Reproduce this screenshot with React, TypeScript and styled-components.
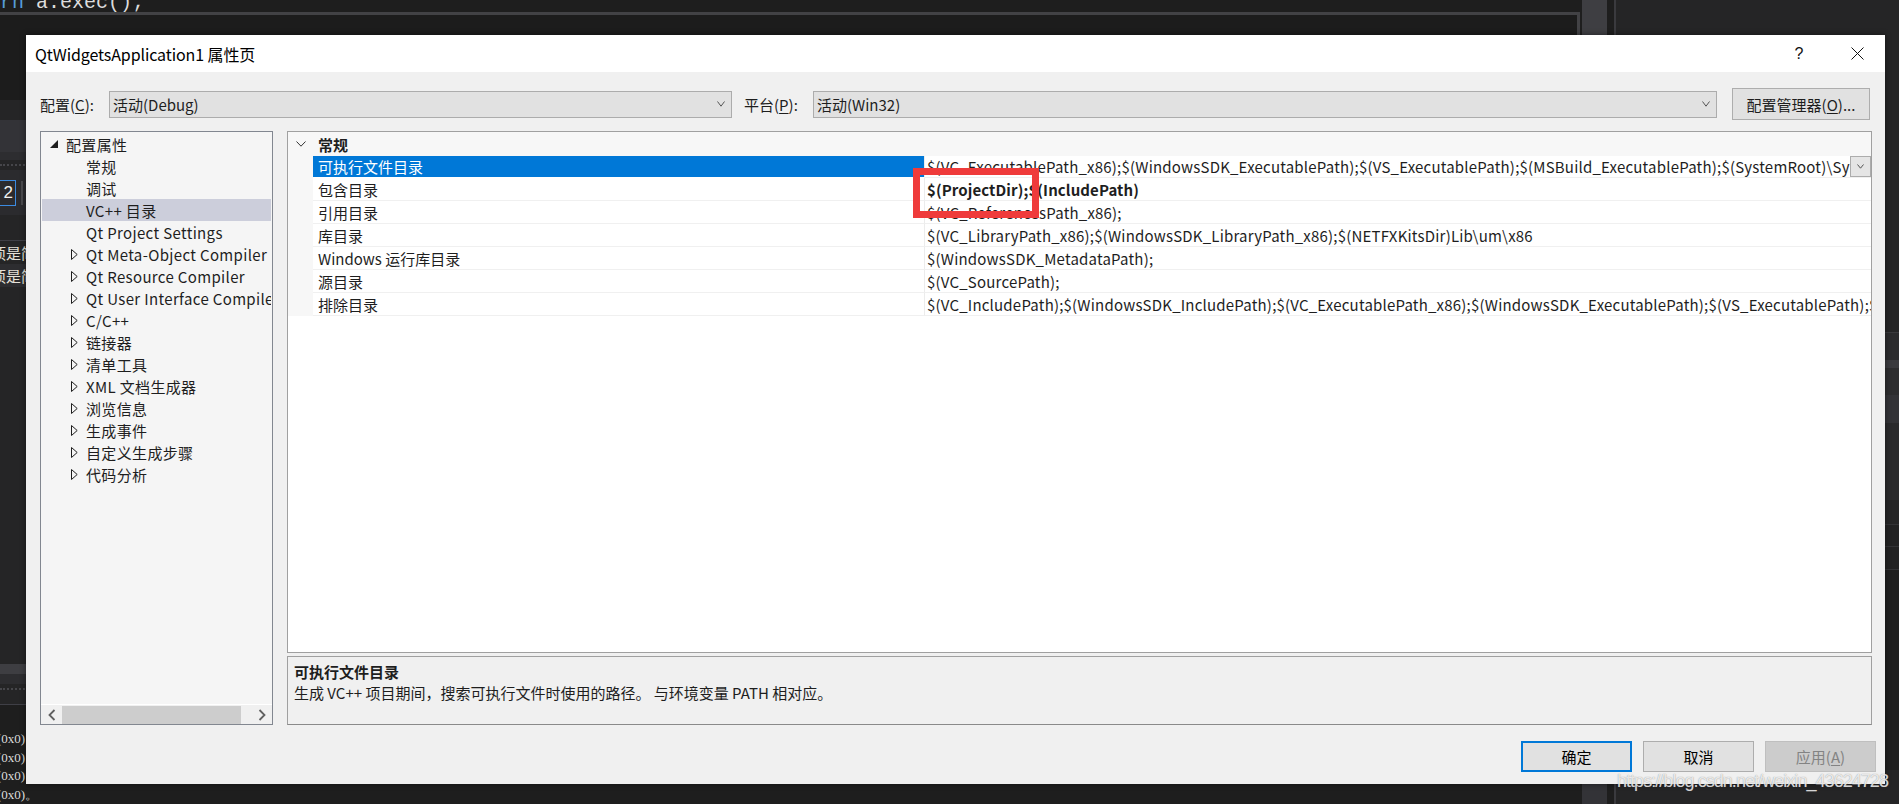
import React from "react";
import styled, { createGlobalStyle, css } from "styled-components";

const UI_FONT = `"Microsoft YaHei UI", "Noto Sans CJK SC", "Noto Sans", sans-serif`;

const GlobalStyle = createGlobalStyle`
  html, body { margin: 0; padding: 0; background: #1e1e1e; }
  body { width: 1899px; height: 804px; overflow: hidden; }
  * { box-sizing: border-box; }
`;

/* ---------------- page & IDE backdrop ---------------- */

const Page = styled.div`
  position: relative;
  width: 1899px;
  height: 804px;
  overflow: hidden;
  background: #1e1e1e;
  font-family: ${UI_FONT};
`;

const Backdrop = styled.div`
  display: flex;
  height: 100%;
`;

const IdeMain = styled.div`
  flex: 0 0 1580px;
  display: flex;
  flex-direction: column;
`;

const CodeTop = styled.div`
  height: 12px;
  display: flex;
  flex-direction: column;
  justify-content: flex-end;
  overflow: hidden;
  font-family: "Liberation Mono", monospace;
  font-size: 20px;
  line-height: 19px;
  white-space: pre;
`;

const Token = styled.span<{ $c: string }>`
  color: ${(p) => p.$c};
`;

const EditorFrame = styled.div`
  height: 88px;
  border-top: 3px solid #424245;
  border-right: 3px solid #424245;
  background: #1c1c1c;
`;

const ToolWindow = styled.div`
  flex: 1;
  display: flex;
  flex-direction: column;
  background: #252526;
  overflow: hidden;
`;

const Band = styled.div<{ $h: number; $bg: string; $line?: string }>`
  flex: 0 0 ${(p) => p.$h}px;
  background: ${(p) => p.$bg};
  ${(p) => p.$line && css`border-bottom: 1px solid ${p.$line};`}
`;

const Grip = styled.div`
  flex: 0 0 10px;
  display: flex;
  align-items: center;
  &::before {
    content: "";
    flex: 1;
    border-top: 2px dotted #46464a;
  }
`;

const ToolStrip = styled.div`
  flex: 0 0 45px;
  display: flex;
  align-items: center;
  background: #2b2b2e;
`;

const CountBox = styled.div`
  width: 16px;
  height: 26px;
  border: 1px solid #3c8be0;
  border-left: none;
  color: #f1f1f1;
  font-size: 17px;
  line-height: 24px;
  display: flex;
  justify-content: flex-end;
  padding-right: 2px;
  font-family: "Liberation Sans", sans-serif;
`;

const StripSeparator = styled.div`
  width: 2px;
  height: 24px;
  margin-left: 5px;
  background: #4a4a4d;
`;

const ListRow = styled.div<{ $alt?: boolean }>`
  flex: 0 0 23px;
  display: flex;
  align-items: center;
  background: ${(p) => (p.$alt ? "#2d2d30" : "#252526")};
`;

const LeftClip = styled.div<{ $w: number }>`
  width: ${(p) => p.$w}px;
  overflow: hidden;
  display: flex;
  justify-content: flex-end;
  white-space: nowrap;
`;

const ListText = styled.span`
  color: #e6e1d8;
  font-size: 15px;
`;

const Fill = styled.div`
  flex: 1;
  background: #252526;
`;

const OutputCode = styled.div`
  flex: 0 0 auto;
  display: flex;
  flex-direction: column;
  padding-top: 25px;
  background: #1e1e1e;
`;

const OutputLine = styled.div`
  height: 18.5px;
  display: flex;
  align-items: center;
  font-family: "Liberation Serif", serif;
  font-size: 13px;
  color: #dcdcdc;
`;

const ScrollColumn = styled.div`
  flex: 0 0 27px;
  display: flex;
  padding-left: 2px;
  background: #1e1e1e;
`;

const ScrollTrack = styled.div`
  flex: 1;
  background: linear-gradient(#3e3e42 0, #3e3e42 40px, #333337 40px);
`;

const PaneDivider = styled.div`
  flex: 0 0 9px;
  background: #1e1e1e;
  border-right: 2px solid #3a3a3e;
`;

const RightPane = styled.div`
  flex: 1;
  display: flex;
  flex-direction: column;
  background: #252526;
`;

/* ---------------- dialog ---------------- */

const Dialog = styled.div`
  position: absolute;
  left: 26px;
  top: 35px;
  width: 1859px;
  height: 749px;
  display: flex;
  flex-direction: column;
  background: #f0f0f0;
  box-shadow: 0 0 6px rgba(0, 0, 0, 0.45);
  color: #1e1e1e;
  font-family: ${UI_FONT};
  font-size: 15px;
`;

const TitleBar = styled.div`
  flex: 0 0 37px;
  display: flex;
  align-items: center;
  padding: 0 4px 0 9px;
  background: #ffffff;
`;

const TitleText = styled.div`
  font-size: 16px;
  color: #000;
  letter-spacing: -0.1px;
`;

const TitleButtons = styled.div`
  margin-left: auto;
  display: flex;
  gap: 10px;
`;

const TitleButton = styled.div`
  width: 48px;
  height: 37px;
  display: flex;
  align-items: center;
  justify-content: center;
  color: #111;
  font-size: 16px;
  font-family: "Liberation Sans", sans-serif;
  font-weight: 300;
`;

const Body = styled.div`
  flex: 1;
  display: flex;
  flex-direction: column;
  padding: 0 9px 12px 14px;
`;

const Toolbar = styled.div`
  margin-top: 16px;
  flex: 0 0 32px;
  display: flex;
  align-items: center;
  padding-right: 6px;
`;

const FieldLabel = styled.label<{ $lead?: number }>`
  flex: 0 0 69px;
  margin-left: ${(p) => p.$lead ?? 0}px;
  font-size: 15px;
  color: #1e1e1e;
  u { text-decoration: underline; text-underline-offset: 2px; }
`;

const Combo = styled.div<{ $w?: number }>`
  ${(p) => (p.$w ? css`flex: 0 0 ${p.$w}px;` : css`flex: 1;`)}
  height: 27px;
  display: flex;
  align-items: center;
  padding: 0 6px 0 3px;
  background: #e1e1e1;
  border: 1px solid #acacac;
  font-size: 15px;
`;

const ComboText = styled.span`
  flex: 1;
`;

const ToolButton = styled.div`
  flex: 0 0 138px;
  margin-left: 15px;
  height: 32px;
  display: flex;
  align-items: center;
  justify-content: center;
  background: #e1e1e1;
  border: 1px solid #adadad;
  font-size: 15px;
  u { text-decoration: underline; text-underline-offset: 2px; }
`;

const Main = styled.div`
  margin-top: 11px;
  margin-right: 4px;
  flex: 0 0 594px;
  display: flex;
  gap: 14px;
`;

/* tree */

const TreePanel = styled.div`
  flex: 0 0 233px;
  width: 233px;
  min-width: 0;
  overflow: hidden;
  display: flex;
  flex-direction: column;
  background: #f5f5f5;
  border: 1px solid #828790;
`;

const TreeList = styled.div`
  flex: 1;
  min-height: 0;
  padding-top: 1px;
  overflow: hidden;
`;

const TreeRow = styled.div<{ $level: number; $selected?: boolean }>`
  height: 22px;
  display: flex;
  align-items: center;
  gap: 4px;
  margin: 0 1px;
  padding-left: ${(p) => 4 + p.$level * 20}px;
  white-space: nowrap;
  overflow: hidden;
  background: ${(p) => (p.$selected ? "#cccedb" : "transparent")};
  font-size: 15px;
  letter-spacing: 0.35px;
  color: #1e1e1e;
`;

const ExpanderSlot = styled.span`
  flex: 0 0 16px;
  height: 22px;
  display: flex;
  align-items: center;
  justify-content: center;
`;

const TreeLabel = styled.span`
  flex: none;
`;

const HScroll = styled.div`
  flex: 0 0 20px;
  display: flex;
  align-items: center;
  border-top: 1px solid #ffffff;
  background: #f0f0f0;
`;

const ScrollArrow = styled.div<{ $end?: boolean }>`
  flex: 0 0 21px;
  height: 19px;
  display: flex;
  align-items: center;
  justify-content: center;
  ${(p) => p.$end && css`margin-left: auto;`}
`;

const ScrollThumb = styled.div`
  flex: 0 0 179px;
  height: 18px;
  background: #cdcdcd;
`;

/* property grid */

const RightColumn = styled.div`
  flex: 1;
  display: flex;
  flex-direction: column;
  gap: 3px;
  min-width: 0;
`;

const PropertyGrid = styled.div`
  position: relative;
  flex: 1;
  background: #ffffff;
  border: 1px solid #a0a0a0;
  overflow: hidden;
`;

const GridRow = styled.div<{ $h: number }>`
  display: grid;
  grid-template-columns: 25px 612px minmax(0, 1fr);
  height: ${(p) => p.$h}px;
`;

const MarginCell = styled.div`
  background: #f7f7f7;
  display: flex;
  align-items: center;
  justify-content: center;
`;

const CategoryCell = styled.div`
  grid-column: 2 / 4;
  background: #f7f7f7;
  display: flex;
  align-items: center;
  padding-left: 5px;
  font-weight: bold;
  font-size: 15px;
`;

const NameCell = styled.div<{ $selected?: boolean }>`
  display: flex;
  align-items: center;
  padding-left: 5px;
  border-bottom: 1px solid #f0f0f0;
  border-right: 1px solid #ececec;
  white-space: nowrap;
  overflow: hidden;
  ${(p) =>
    p.$selected
      ? css`
          background: #0078d7;
          color: #ffffff;
          border-bottom-color: #ffffff;
        `
      : css`
          color: #1e1e1e;
        `}
`;

const ValueCell = styled.div<{ $bold?: boolean }>`
  display: flex;
  align-items: center;
  padding-left: 2px;
  border-bottom: 1px solid #f0f0f0;
  overflow: hidden;
  white-space: nowrap;
  letter-spacing: ${(p) => (p.$bold ? "0.1px" : "0.2px")};
  font-weight: ${(p) => (p.$bold ? "bold" : "normal")};
`;

const ValueText = styled.span`
  flex: 1;
  overflow: hidden;
  min-width: 0;
`;

const DropButton = styled.div`
  flex: 0 0 21px;
  height: 21px;
  display: flex;
  align-items: center;
  justify-content: center;
  background: #e5e5e5;
  border: 1px solid #acacac;
`;

const Highlight = styled.div`
  position: absolute;
  left: 625px;
  top: 36px;
  width: 126px;
  height: 50px;
  border: 7px solid #ef3b3b;
  pointer-events: none;
`;

const Description = styled.div`
  flex: 0 0 69px;
  display: flex;
  flex-direction: column;
  padding: 4px 6px;
  background: #f0f0f0;
  border: 1px solid #a0a0a0;
  border-bottom-color: #8a8a8a;
`;

const DescTitle = styled.div`
  font-weight: bold;
  font-size: 15px;
  line-height: 21px;
`;

const DescText = styled.div`
  font-size: 15px;
  line-height: 22px;
`;

/* footer */

const Footer = styled.div`
  margin-top: 16px;
  flex: 0 0 31px;
  display: flex;
  justify-content: flex-end;
  gap: 11px;
`;

const DialogButton = styled.div<{ $variant: "default" | "normal" | "disabled" }>`
  flex: 0 0 111px;
  display: flex;
  align-items: center;
  justify-content: center;
  font-size: 15px;
  u { text-decoration: underline; text-underline-offset: 2px; }
  ${(p) =>
    p.$variant === "default"
      ? css`
          background: #e1e1e1;
          border: 2px solid #0078d7;
          color: #000;
        `
      : p.$variant === "disabled"
      ? css`
          background: #cccccc;
          border: 1px solid #bfbfbf;
          color: #838383;
        `
      : css`
          background: #e1e1e1;
          border: 1px solid #adadad;
          color: #000;
        `}
`;

const Watermark = styled.div`
  position: absolute;
  right: 11px;
  top: 771px;
  font-family: "Liberation Sans", Arial, sans-serif;
  font-size: 18px;
  letter-spacing: -0.95px;
  color: rgba(255, 255, 255, 0.8);
  text-shadow: 0 0 1px rgba(90, 90, 90, 0.7);
  white-space: nowrap;
  pointer-events: none;
`;

/* ---------------- icons ---------------- */

const Chevron = ({ w = 9, h = 5, color = "#444" }: { w?: number; h?: number; color?: string }) => (
  <svg width={w} height={h + 1} viewBox={`0 0 ${w} ${h + 1}`}>
    <polyline points={`0.5,0.5 ${w / 2},${h + 0.2} ${w - 0.5},0.5`} fill="none" stroke={color} strokeWidth="1" />
  </svg>
);

const ExpandedTri = () => (
  <svg width="8" height="8" viewBox="0 0 8 8">
    <polygon points="8,0 8,8 0,8" fill="#1e1e1e" />
  </svg>
);

const CollapsedTri = () => (
  <svg width="7" height="11" viewBox="0 0 7 11">
    <polygon points="0.5,0.5 6.2,5.5 0.5,10.5" fill="none" stroke="#1e1e1e" strokeWidth="1" />
  </svg>
);

const ArrowIcon = ({ dir }: { dir: "left" | "right" }) => (
  <svg width="8" height="12" viewBox="0 0 8 12">
    <polyline
      points={dir === "left" ? "6.5,1 1.5,6 6.5,11" : "1.5,1 6.5,6 1.5,11"}
      fill="none"
      stroke="#606060"
      strokeWidth="1.8"
    />
  </svg>
);

const CloseIcon = () => (
  <svg width="13" height="13" viewBox="0 0 13 13">
    <path d="M0.5 0.5 L12.5 12.5 M12.5 0.5 L0.5 12.5" stroke="#111" strokeWidth="1" />
  </svg>
);

/* ---------------- data ---------------- */

type TreeItem = { label: string; level: number; expander?: "open" | "closed"; selected?: boolean };

const treeItems: TreeItem[] = [
  { label: "配置属性", level: 0, expander: "open" },
  { label: "常规", level: 1 },
  { label: "调试", level: 1 },
  { label: "VC++ 目录", level: 1, selected: true },
  { label: "Qt Project Settings", level: 1 },
  { label: "Qt Meta-Object Compiler", level: 1, expander: "closed" },
  { label: "Qt Resource Compiler", level: 1, expander: "closed" },
  { label: "Qt User Interface Compiler", level: 1, expander: "closed" },
  { label: "C/C++", level: 1, expander: "closed" },
  { label: "链接器", level: 1, expander: "closed" },
  { label: "清单工具", level: 1, expander: "closed" },
  { label: "XML 文档生成器", level: 1, expander: "closed" },
  { label: "浏览信息", level: 1, expander: "closed" },
  { label: "生成事件", level: 1, expander: "closed" },
  { label: "自定义生成步骤", level: 1, expander: "closed" },
  { label: "代码分析", level: 1, expander: "closed" },
];

type Prop = { name: string; value: string; selected?: boolean; bold?: boolean };

const props: Prop[] = [
  {
    name: "可执行文件目录",
    value:
      "$(VC_ExecutablePath_x86);$(WindowsSDK_ExecutablePath);$(VS_ExecutablePath);$(MSBuild_ExecutablePath);$(SystemRoot)\\SysWow64;$(FxCopDir);$(PATH);",
    selected: true,
  },
  { name: "包含目录", value: "$(ProjectDir);$(IncludePath)", bold: true },
  { name: "引用目录", value: "$(VC_ReferencesPath_x86);" },
  { name: "库目录", value: "$(VC_LibraryPath_x86);$(WindowsSDK_LibraryPath_x86);$(NETFXKitsDir)Lib\\um\\x86" },
  { name: "Windows 运行库目录", value: "$(WindowsSDK_MetadataPath);" },
  { name: "源目录", value: "$(VC_SourcePath);" },
  {
    name: "排除目录",
    value:
      "$(VC_IncludePath);$(WindowsSDK_IncludePath);$(VC_ExecutablePath_x86);$(WindowsSDK_ExecutablePath);$(VS_ExecutablePath);$(MSBuild_ExecutablePath);$(VC_LibraryPath_x86);",
  },
];

const rightBands: { h: number; bg: string; line?: string }[] = [
  { h: 333, bg: "#252526", line: "#3a3a3d" },
  { h: 27, bg: "#2b2b2d" },
  { h: 8, bg: "#3a3a3e" },
  { h: 27, bg: "#2d2d2f" },
  { h: 28, bg: "#333337" },
  { h: 77, bg: "#2a2a2c" },
  { h: 25, bg: "#252526", line: "#333336" },
  { h: 22, bg: "#222223", line: "#333336" },
  { h: 23, bg: "#222223", line: "#333336" },
  { h: 200, bg: "#1f1f1f" },
];

/* ---------------- app ---------------- */

export default function App() {
  return (
    <Page>
      <GlobalStyle />
      <Backdrop>
        <IdeMain>
          <CodeTop>
            <div>
              <Token $c="#569cd6">rn</Token>
              <Token $c="#dcdcdc"> a.exec();</Token>
            </div>
          </CodeTop>
          <EditorFrame />
          <ToolWindow>
            <Band $h={20} $bg="#252526" />
            <Band $h={32} $bg="#333337" />
            <Band $h={8} $bg="#2d2d30" />
            <Grip />
            <ToolStrip>
              <CountBox>2</CountBox>
              <StripSeparator />
            </ToolStrip>
            <Band $h={26} $bg="#252526" $line="#3f3f46" />
            <ListRow>
              <LeftClip $w={36}>
                <ListText>选项是简</ListText>
              </LeftClip>
            </ListRow>
            <ListRow $alt>
              <LeftClip $w={36}>
                <ListText>选项是简</ListText>
              </LeftClip>
            </ListRow>
            <Fill />
            <Band $h={10} $bg="#3e3e42" />
            <Band $h={10} $bg="#2d2d30" />
            <Grip />
            <Band $h={11} $bg="#252526" $line="#3f3f46" />
            <OutputCode>
              {["(0x0)", "(0x0)", "(0x0)"].map((t, i) => (
                <OutputLine key={i}>
                  <LeftClip $w={25}>{t}</LeftClip>
                </OutputLine>
              ))}
              <OutputLine>
                <LeftClip $w={38}>(0x0)。</LeftClip>
              </OutputLine>
            </OutputCode>
          </ToolWindow>
        </IdeMain>
        <ScrollColumn>
          <ScrollTrack />
        </ScrollColumn>
        <PaneDivider />
        <RightPane>
          {rightBands.map((b, i) => (
            <Band key={i} $h={b.h} $bg={b.bg} $line={b.line} />
          ))}
        </RightPane>
      </Backdrop>

      <Dialog>
        <TitleBar>
          <TitleText>QtWidgetsApplication1 属性页</TitleText>
          <TitleButtons>
            <TitleButton>?</TitleButton>
            <TitleButton>
              <CloseIcon />
            </TitleButton>
          </TitleButtons>
        </TitleBar>
        <Body>
          <Toolbar>
            <FieldLabel>
              配置(<u>C</u>):
            </FieldLabel>
            <Combo $w={623}>
              <ComboText>活动(Debug)</ComboText>
              <Chevron w={8} h={5} color="#555" />
            </Combo>
            <FieldLabel $lead={12}>
              平台(<u>P</u>):
            </FieldLabel>
            <Combo>
              <ComboText>活动(Win32)</ComboText>
              <Chevron w={8} h={5} color="#555" />
            </Combo>
            <ToolButton>
              配置管理器(<u>O</u>)...
            </ToolButton>
          </Toolbar>

          <Main>
            <TreePanel>
              <TreeList>
                {treeItems.map((it) => (
                  <TreeRow key={it.label} $level={it.level} $selected={it.selected}>
                    <ExpanderSlot>
                      {it.expander === "open" && <ExpandedTri />}
                      {it.expander === "closed" && <CollapsedTri />}
                    </ExpanderSlot>
                    <TreeLabel>{it.label}</TreeLabel>
                  </TreeRow>
                ))}
              </TreeList>
              <HScroll>
                <ScrollArrow>
                  <ArrowIcon dir="left" />
                </ScrollArrow>
                <ScrollThumb />
                <ScrollArrow $end>
                  <ArrowIcon dir="right" />
                </ScrollArrow>
              </HScroll>
            </TreePanel>

            <RightColumn>
              <PropertyGrid>
                <GridRow $h={24}>
                  <MarginCell>
                    <Chevron w={10} h={5} color="#333" />
                  </MarginCell>
                  <CategoryCell>常规</CategoryCell>
                </GridRow>
                {props.map((p) => (
                  <GridRow key={p.name} $h={p.selected ? 22 : 23}>
                    <MarginCell />
                    <NameCell $selected={p.selected}>{p.name}</NameCell>
                    <ValueCell $bold={p.bold}>
                      <ValueText>{p.value}</ValueText>
                      {p.selected && (
                        <DropButton>
                          <Chevron w={7} h={4} color="#555" />
                        </DropButton>
                      )}
                    </ValueCell>
                  </GridRow>
                ))}
                <Highlight />
              </PropertyGrid>
              <Description>
                <DescTitle>可执行文件目录</DescTitle>
                <DescText>生成 VC++ 项目期间，搜索可执行文件时使用的路径。 与环境变量 PATH 相对应。</DescText>
              </Description>
            </RightColumn>
          </Main>

          <Footer>
            <DialogButton $variant="default">确定</DialogButton>
            <DialogButton $variant="normal">取消</DialogButton>
            <DialogButton $variant="disabled">
              应用(<u>A</u>)
            </DialogButton>
          </Footer>
        </Body>
      </Dialog>

      <Watermark>https://blog.csdn.net/weixin_43624728</Watermark>
    </Page>
  );
}
